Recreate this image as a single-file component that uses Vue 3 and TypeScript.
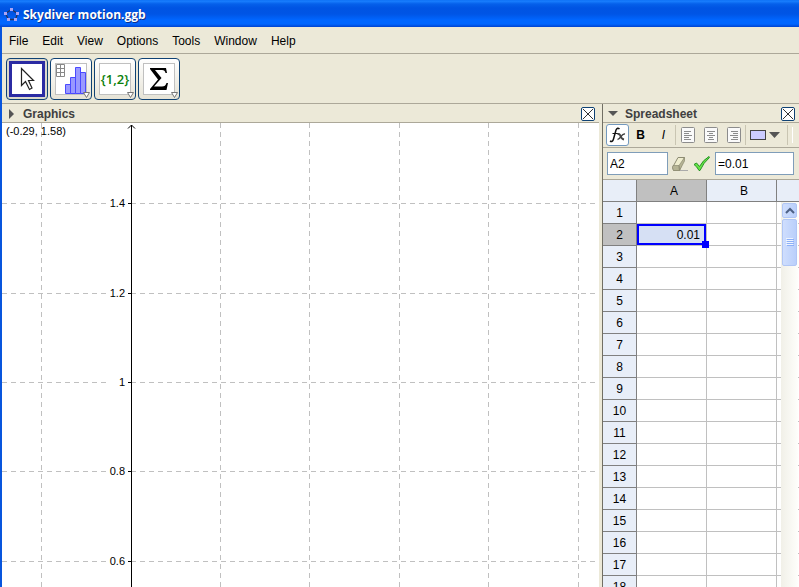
<script setup lang="ts">
import { ref } from 'vue'

interface Tick {
  y: number
  label: string
}

const menus: string[] = ['File', 'Edit', 'View', 'Options', 'Tools', 'Window', 'Help']
const verticals: number[] = [39, 218, 307, 397, 486, 576]
const ticks: Tick[] = [
  { y: 80, label: '1.4' },
  { y: 170, label: '1.2' },
  { y: 259, label: '1' },
  { y: 348, label: '0.8' },
  { y: 438, label: '0.6' },
]
const rows: number[] = Array.from({ length: 18 }, (_, i) => i + 1)
const columns: string[] = ['A', 'B']
const cells: Record<string, string> = { A2: '0.01' }
const selected = 'A2'
const cellName = ref('A2')
const formula = ref('=0.01')
const aligns = [
  { name: 'Align left', lines: ['M3 4.5h7', 'M3 6.5h5', 'M3 8.5h8', 'M3 10.5h5', 'M3 12.5h7'] },
  { name: 'Align center', lines: ['M3 4.5h8', 'M5 6.5h4', 'M3 8.5h8', 'M5 10.5h4', 'M4 12.5h6'] },
  { name: 'Align right', lines: ['M4 4.5h7', 'M6 6.5h5', 'M3 8.5h8', 'M6 10.5h5', 'M4 12.5h7'] },
]
</script>

<template>
  <div class="window">
    <header class="titlebar">
      <svg class="app-icon" width="16" height="16" viewBox="0 0 16 16" aria-hidden="true">
        <path d="M7.5 2.5 13.5 6.5 11.5 12.5 4.5 12.5 1.5 6.5Z" fill="none" stroke="#26335c" stroke-width="1.3" />
        <g fill="#a9a4f4">
          <rect x="6" y="1" width="3" height="3" /><rect x="12" y="5" width="3" height="3" />
          <rect x="10" y="11" width="3" height="3" /><rect x="3" y="11" width="3" height="3" />
          <rect x="0" y="5" width="3" height="3" />
        </g>
      </svg>
      <h1>Skydiver motion.ggb</h1>
    </header>

    <div class="body">
      <nav class="menubar">
        <button v-for="m in menus" :key="m" type="button">{{ m }}</button>
      </nav>

      <div class="toolbar">
        <button class="tool active" type="button" aria-label="Move">
          <svg width="40" height="40" viewBox="-1 -1 40 40">
            <rect x="2.5" y="2.500" width="33" height="33" fill="#fff" stroke="#2b2ba3" stroke-width="3" />
            <path d="M13.5 8.5V25.5L17.5 21.5L21.5 29.5L24 28L20.5 20.5H25.5Z" fill="#fff" stroke="#222" stroke-width="1.2" />
          </svg>
        </button>
        <button class="tool" type="button" aria-label="One variable analysis">
          <svg width="40" height="40" viewBox="-1 -1 40 40">
            <rect x="3.5" y="3.5" width="31" height="31" fill="#fff" stroke="#c0c0c0" />
            <path d="M4.5 4.5h8v12h-8zM8.5 4.5v12M4.5 8.5h8M4.5 12.5h8" fill="#fff" stroke="#888" />
            <path d="M13.5 24.500h5v9h-5zM18.5 17.5h5v16h-5zM23.5 7.500h5v26h-5zM28.5 12.500h5v21h-5z" fill="#9999ff" stroke="#4a4aff" />
            <path d="M31.5 32.500h6l-3 5z" fill="#fff" stroke="#777" />
          </svg>
        </button>
        <button class="tool" type="button" aria-label="Create list">
          <svg width="40" height="40" viewBox="-1 -1 40 40">
            <rect x="3.5" y="3.5" width="31" height="31" fill="#fff" stroke="#c0c0c0" />
            <text class="list-glyph" x="19" y="24" text-anchor="middle">{1,2}</text>
            <path d="M31.5 32.500h6l-3 5z" fill="#fff" stroke="#777" />
          </svg>
        </button>
        <button class="tool" type="button" aria-label="Sum">
          <svg width="40" height="40" viewBox="-1 -1 40 40">
            <rect x="3.5" y="3.5" width="31" height="31" fill="#fff" stroke="#c0c0c0" />
            <path d="M10 8H26L27 13H25.5Q25 10 22 10H15L21.5 18L14 26.5H22Q25.5 26.5 26.5 23H28L26.5 30H10V29L18 19.5L10 9Z" fill="#000" />
            <path d="M31.5 32.500h6l-3 5z" fill="#fff" stroke="#777" />
          </svg>
        </button>
      </div>

      <main class="panels">
        <section class="graphics">
          <div class="panel-head">
            <svg class="fold" width="12" height="12" viewBox="0 0 12 12"><path d="M4 1L9 6L4 11Z" fill="#555" /></svg>
            <h2>Graphics</h2>
            <button class="close" type="button" aria-label="Close Graphics">
              <svg width="12" height="12" viewBox="0 0 12 12"><path d="M1 1L11 11M11 1L1 11" stroke="#333" /></svg>
            </button>
          </div>
          <svg class="plot" role="img" aria-label="Coordinate plane">
            <g class="grid">
              <line v-for="x in verticals" :key="x" :x1="x + 0.5" :x2="x + 0.5" y1="0" y2="100%" />
              <g v-for="t in ticks" :key="t.y">
                <line x1="0" x2="105" :y1="t.y + 0.5" :y2="t.y + 0.5" />
                <line x1="129" x2="100%" :y1="t.y + 0.5" :y2="t.y + 0.5" />
              </g>
            </g>
            <g stroke="#000" fill="none">
              <line x1="129.5" x2="129.5" y1="2" y2="100%" />
              <path d="M126 5.5L129.5 2L133 5.5" />
              <line v-for="t in ticks" :key="t.y" x1="126" x2="129" :y1="t.y + 0.5" :y2="t.y + 0.5" />
            </g>
            <text v-for="t in ticks" :key="t.label" x="123" :y="t.y + 4" text-anchor="end">{{ t.label }}</text>
            <text x="4" y="12">(-0.29, 1.58)</text>
          </svg>
        </section>

        <section class="sheet">
          <div class="panel-head">
            <svg class="fold" width="12" height="12" viewBox="0 0 12 12"><path d="M1 3H11L6 8Z" fill="#555" /></svg>
            <h2>Spreadsheet</h2>
            <button class="close" type="button" aria-label="Close Spreadsheet">
              <svg width="12" height="12" viewBox="0 0 12 12"><path d="M1 1L11 11M11 1L1 11" stroke="#333" /></svg>
            </button>
          </div>

          <div class="format">
            <button class="fx" type="button" aria-label="Show input bar">
              <svg width="21" height="20" viewBox="0 0 21 20" fill="none" stroke="#111">
                <path d="M12.5 4Q10.500 2 9 5L6.500 14Q5.500 17.500 3 16" stroke-width="1.5" />
                <path d="M5.500 8.5H11.5" />
                <path d="M10.500 9.5Q12.500 8 13.500 11T17 14.500" stroke-width="2" stroke="#444" />
                <path d="M18 9Q16 8.5 14 11.5T10.500 14.5" stroke-width="1.4" stroke="#444" />
              </svg>
            </button>
            <button class="letter bold" type="button" aria-label="Bold">B</button>
            <button class="letter italic" type="button" aria-label="Italic">I</button>
            <span class="rule"></span>
            <button v-for="a in aligns" :key="a.name" class="align" type="button" :aria-label="a.name">
              <svg width="14" height="16" viewBox="0 0 14 16" fill="none" stroke="#8c8c8c">
                <rect x="0.5" y="0.5" width="13" height="15" rx="1" fill="#fafafa" />
                <path v-for="l in a.lines" :key="l" :d="l" />
              </svg>
            </button>
            <span class="rule"></span>
            <button class="swatch" type="button" aria-label="Background color">
              <svg width="30" height="12" viewBox="0 0 30 12">
                <rect x="0.5" y="1.5" width="15" height="9" fill="#ccccff" stroke="#444" />
                <path d="M19 3H30L24.5 9Z" fill="#555" />
              </svg>
            </button>
            <span class="rule"></span>
            <span class="rule light"></span>
          </div>

          <div class="formula">
            <input v-model="cellName" class="name" type="text" aria-label="Cell name" />
            <button class="icon" type="button" aria-label="Clear">
              <svg width="18" height="18" viewBox="0 0 18 18">
                <path d="M9 15.500H17" stroke="#aaa" />
                <path d="M7 2.5H13.5L8.5 15.500H2.500L1.500 12.500Z" fill="#efedcf" stroke="#8d8b72" />
                <path d="M2 10.500H8L8.500 15.500H2.500L1.500 12.500ZM8 10.500L13.500 2.5V6L8.500 15.500Z" fill="#b5b394" stroke="#8d8b72" stroke-width="0.7" />
              </svg>
            </button>
            <button class="icon" type="button" aria-label="Accept">
              <svg width="18" height="18" viewBox="0 0 18 18">
                <path d="M1 9.5L3.5 8L6.5 11.5Q10 5 16 1.5L16.5 2.5Q10.5 7.500 7 15.5H6Q4 11.500 1 9.5Z" fill="#66e645" stroke="#259225" />
              </svg>
            </button>
            <input v-model="formula" class="value" type="text" aria-label="Cell content" />
          </div>

          <div class="table-wrap">
            <table>
              <colgroup><col class="c-num" /><col class="c-cell" /><col class="c-cell" /><col /></colgroup>
              <thead>
                <tr>
                  <th></th>
                  <th v-for="c in columns" :key="c" class="letter-head" scope="col" :class="{ on: c === selected[0] }">{{ c }}</th>
                  <th class="last"></th>
                </tr>
              </thead>
              <tbody>
                <tr v-for="r in rows" :key="r">
                  <th scope="row" :class="{ on: String(r) === selected.slice(1) }">{{ r }}</th>
                  <td v-for="c in columns" :key="c">
                    <div v-if="c + r === selected" class="picked">{{ cells[c + r] }}<i class="handle"></i></div>
                    <template v-else>{{ cells[c + r] }}</template>
                  </td>
                  <td></td>
                </tr>
              </tbody>
            </table>
            <div class="scroll">
              <button type="button" class="up" aria-label="Scroll up">
                <svg width="10" height="8" viewBox="0 0 10 8"><path d="M1 6L5 2L9 6" fill="none" stroke="#4d6185" stroke-width="2" /></svg>
              </button>
              <div class="thumb">
                <svg width="8" height="9" viewBox="0 0 8 9"><path d="M0 .5H7M0 2.5H7M0 4.5H7M0 6.5H7" stroke="#eef4fe" /><path d="M1 1.5H8M1 3.5H8M1 5.5H8M1 7.5H8" stroke="#8cb0f8" /></svg>
              </div>
            </div>
          </div>
        </section>
      </main>
    </div>
  </div>
</template>

<style>
body {
  margin: 0;
  overflow: hidden;
}
</style>

<style scoped>
.window {
  height: 100vh;
  display: flex;
  flex-direction: column;
  overflow: hidden;
  background: #ece9d8;
  color: #000;
  font: 12px/16px "Liberation Sans", Arial, sans-serif;
}
.window * {
  box-sizing: border-box;
}
button {
  font: inherit;
  color: inherit;
  margin: 0;
  padding: 0;
  border: 0;
  background: none;
  flex: none;
}
svg {
  display: block;
}
h1,
h2 {
  margin: 0;
}
.titlebar {
  flex: none;
  height: 27px;
  display: flex;
  align-items: center;
  gap: 3px;
  padding: 2px 4px 0;
  background: linear-gradient(#0a6cf2 0, #1a80ff 1px, #0560ea 4px, #0054e3 8px, #0055e5 14px, #0066ff 20px, #0066ff 24px, #0043cf 27px);
}
h1 {
  color: #fff;
  font: bold 12px/16px "Open Sans", sans-serif;
  text-shadow: 1px 1px 0 #0f2f8a;
}
.body {
  flex: 1;
  min-height: 0;
  display: flex;
  flex-direction: column;
  border-left: 2px solid #0855dd;
}
.menubar {
  flex: none;
  height: 27px;
  display: flex;
  align-items: center;
  gap: 14px;
  padding: 2px 0 0 7px;
  border-bottom: 1px solid #aca899;
}
.toolbar {
  flex: none;
  height: 50px;
  display: flex;
  gap: 2px;
  padding: 4px;
  border-bottom: 1px solid #aca899;
}
.tool {
  width: 42px;
  height: 42px;
  border: 1px solid #0f4274;
  border-radius: 4px;
  background: linear-gradient(#fff, #e6e3d6);
}
.tool.active {
  background: #dcd9cc;
}
.list-glyph {
  font: 600 13px "Open Sans", sans-serif;
  fill: #0a800a;
}
.panels {
  flex: 1;
  min-height: 0;
  display: grid;
  grid-template-columns: minmax(0, 1fr) 197px;
  column-gap: 3px;
}
.graphics,
.sheet {
  min-width: 0;
  min-height: 0;
  display: flex;
  flex-direction: column;
  overflow: hidden;
}
.sheet {
  border-left: 1px solid #716f64;
}
.panel-head {
  flex: none;
  height: 19px;
  display: flex;
  align-items: center;
  gap: 6px;
  padding: 1px 4px 0 3px;
  border-bottom: 1px solid #aca899;
}
.sheet .panel-head {
  padding-left: 4px;
}
h2 {
  flex: 1;
  font: bold 12px/16px "Liberation Sans", Arial, sans-serif;
  color: #404040;
}
.close {
  width: 14px;
  height: 14px;
  border: 1px solid #0f4274;
  border-radius: 2px;
  background: #fff;
}
.plot {
  flex: 1;
  width: 100%;
  min-height: 0;
  background: #fff;
  font-size: 11px;
}
.grid line {
  stroke: #c0c0c0;
  stroke-dasharray: 5 4;
}
.format {
  flex: none;
  height: 25px;
  display: flex;
  align-items: center;
  padding-left: 3px;
  border-bottom: 1px solid #aca899;
}
.fx {
  width: 23px;
  height: 22px;
  border: 1px solid #7399be;
  border-radius: 3px;
  background: #fff;
}
.letter {
  width: 23px;
  text-align: center;
}
.bold {
  font-weight: bold;
}
.italic {
  font-style: italic;
}
.rule {
  flex: none;
  width: 1px;
  height: 20px;
  margin-right: 4px;
  background: #c9c5b2;
}
.rule.light {
  height: 16px;
  margin: 0;
  background: #fff;
}
.align {
  width: 23px;
  padding-left: 1px;
}
.align + .rule {
  margin: 0 4px 0 -4px;
}
.swatch {
  margin-right: 7px;
}
.formula {
  flex: none;
  height: 32px;
  display: flex;
  align-items: center;
  gap: 4px;
  padding: 0 5px 0 4px;
  border-bottom: 1px solid #aca899;
}
.icon {
  width: 19px;
}
.formula input {
  height: 23px;
  min-width: 0;
  margin: 0;
  padding: 0 2px;
  border: 1px solid #7f9db9;
  background: #fff;
  font: inherit;
  color: #000;
}
.formula .name {
  flex: none;
  width: 61px;
}
.formula .icon {
  width: 19px;
}
.formula {
  gap: 3px;
}
.value {
  flex: 1;
}
.table-wrap {
  position: relative;
  flex: 1;
  min-height: 0;
  overflow: hidden;
  background: #fff;
}
table {
  width: 100%;
  table-layout: fixed;
  border-collapse: separate;
  border-spacing: 0;
}
.c-num {
  width: 34px;
}
.c-cell {
  width: 70px;
}
th,
td {
  height: 22px;
  padding: 0;
  font-weight: normal;
  text-align: center;
}
th {
  background: #e8eef8;
  border-right: 1px solid #808080;
  border-bottom: 1px solid #808080;
}
.letter-head {
  padding-left: 5px;
}
th.on {
  background: #c0c0c0;
}
th.last {
  border-right: 0;
}
td {
  border-right: 1px solid #c0c0c0;
  border-bottom: 1px solid #c0c0c0;
  text-align: right;
}
td:last-child {
  border-right: 0;
}
.picked {
  position: relative;
  height: 21px;
  padding-right: 4px;
  border: 2px solid #00f;
  background: #d6e0f4;
  line-height: 18px;
}
.handle {
  position: absolute;
  right: -5px;
  bottom: -5px;
  width: 7px;
  height: 7px;
  background: #00f;
}
.scroll {
  position: absolute;
  top: 22px;
  right: 1px;
  bottom: 0;
  width: 17px;
  background: linear-gradient(90deg, #f1f0e8, #fefefb);
}
.up,
.thumb {
  display: flex;
  align-items: center;
  justify-content: center;
  width: 15px;
  margin: 1px;
  border: 1px solid #b0c6f5;
  border-radius: 2px;
  background: linear-gradient(90deg, #cfdefd, #b9cffb);
}
.up {
  height: 15px;
}
.thumb {
  height: 47px;
}
</style>
